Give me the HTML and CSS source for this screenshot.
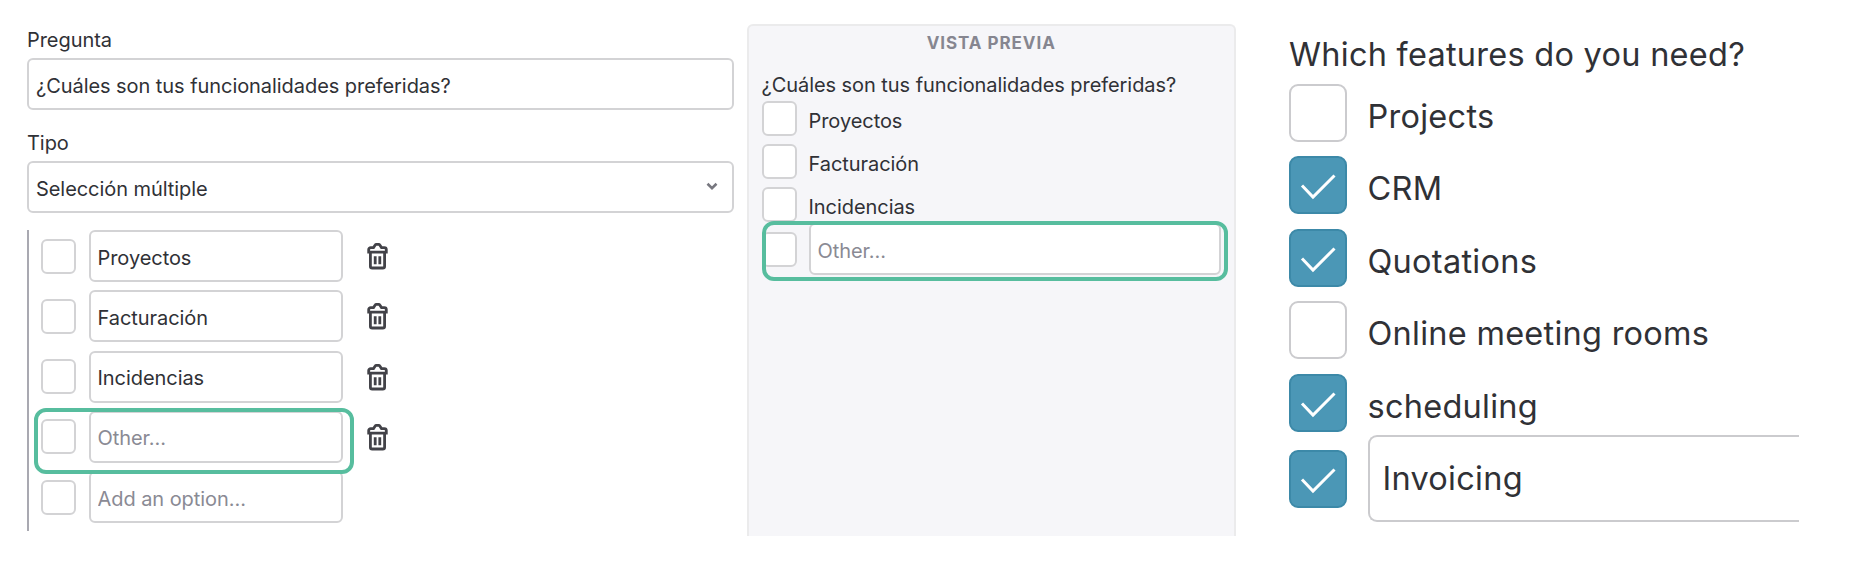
FILE: index.html
```html
<!DOCTYPE html>
<html lang="es">
<head>
  <meta charset="utf-8">
  <title>Encuesta</title>
  <link rel="stylesheet" href="styles.css">
</head>
<body>
<svg class="symbols" width="0" height="0">
  <symbol id="trash" viewBox="0 0 22 28">
    <path d="M3.400 11v13.200a1.800 1.800 0 0 0 1.800 1.800h10.600a1.800 1.800 0 0 0 1.800-1.800V11M1.700 10.200V7.600a2 2 0 0 1 2-2h2.800l1.700-2.600a1.400 1.400 0 0 1 1.200-.7h2.200a1.400 1.400 0 0 1 1.200.7l1.700 2.600h2.800a2 2 0 0 1 2 2v2.600zM8.200 14.200v8M12.800 14.200v8"/>
  </symbol>
  <symbol id="check" viewBox="0 0 58 58">
    <path d="M13 29.500l11 11.500L45.500 19.500"/>
  </symbol>
</svg>
<div class="page">

  <form class="editor">
    <label class="label" for="question">Pregunta</label>
    <input class="input" id="question" type="text" value="¿Cuáles son tus funcionalidades preferidas?">
    <label class="label label-type">Tipo</label>
    <div class="input select">
      <span>Selección múltiple</span>
      <svg class="chevron" width="12" height="9" viewBox="0 0 12 9"><path d="M1.500 1.800L6 6.200l4.500-4.400"/></svg>
    </div>
    <div class="options">
      <div class="option">
        <span class="box"></span>
        <input class="input" type="text" value="Proyectos">
        <svg class="trash"><use href="#trash"/></svg>
      </div>
      <div class="option">
        <span class="box"></span>
        <input class="input" type="text" value="Facturación">
        <svg class="trash"><use href="#trash"/></svg>
      </div>
      <div class="option">
        <span class="box"></span>
        <input class="input" type="text" value="Incidencias">
        <svg class="trash"><use href="#trash"/></svg>
      </div>
      <div class="option">
        <span class="box"></span>
        <input class="input" type="text" placeholder="Other...">
        <svg class="trash"><use href="#trash"/></svg>
        <div class="highlight highlight-option"></div>
      </div>
      <div class="option">
        <span class="box"></span>
        <input class="input" type="text" placeholder="Add an option...">
      </div>
    </div>
  </form>

  <div class="preview">
    <h2 class="preview-title">VISTA PREVIA</h2>
    <p class="preview-question">¿Cuáles son tus funcionalidades preferidas?</p>
    <div class="choice"><span class="box"></span><span class="choice-text">Proyectos</span></div>
    <div class="choice"><span class="box"></span><span class="choice-text">Facturación</span></div>
    <div class="choice"><span class="box"></span><span class="choice-text">Incidencias</span></div>
    <div class="choice choice-other">
      <span class="box"></span>
      <input class="input" type="text" placeholder="Other...">
      <div class="highlight highlight-choice"></div>
    </div>
  </div>

  <div class="survey">
    <p class="survey-question">Which features do you need?</p>
    <div class="feature"><span class="tick"></span><span class="feature-text">Projects</span></div>
    <div class="feature"><span class="tick checked"><svg><use href="#check"/></svg></span><span class="feature-text">CRM</span></div>
    <div class="feature"><span class="tick checked"><svg><use href="#check"/></svg></span><span class="feature-text">Quotations</span></div>
    <div class="feature"><span class="tick"></span><span class="feature-text">Online meeting rooms</span></div>
    <div class="feature"><span class="tick checked"><svg><use href="#check"/></svg></span><span class="feature-text">scheduling</span></div>
    <div class="feature feature-other">
      <span class="tick checked"><svg><use href="#check"/></svg></span>
      <div class="feature-input">Invoicing</div>
    </div>
  </div>

</div>
</body>
</html>
```

FILE: styles.css
```css
* {
    box-sizing: border-box;
}

body {
    margin: 0;
    background: #fff;
    color: #303136;
    font-family: Inter, "Liberation Sans", sans-serif;
    font-size: 20px;
    line-height: 24px;
    letter-spacing: -.06px;
}

p, h2 {
    margin: 0;
}

.symbols {
    position: absolute;
}

.page {
    display: flex;
    align-items: flex-start;
    width: 1870px;
    height: 562px;
    overflow: hidden;
}

/* shared fields */
.input {
    display: block;
    width: 100%;
    height: 52px;
    margin: 0;
    padding: 3px 7px 0;
    border: 2px solid #d3d3d5;
    border-radius: 6px;
    background: #fff;
    color: #303136;
    font: inherit;
    letter-spacing: inherit;
    outline: none;
}

.input::placeholder {
    color: #8a8a94;
    opacity: 1;
}

.box {
    flex: none;
    width: 35px;
    height: 35px;
    border: 2px solid #d3d3d5;
    border-radius: 6px;
    background: #fff;
}

.highlight {
    position: absolute;
    z-index: 1;
    border: 4px solid #57bd9e;
    border-radius: 12px;
}

/* question editor */
.editor {
    width: 707px;
    margin-left: 27px;
    padding-top: 28px;
}

.label {
    display: block;
    height: 30px;
}

.label-type {
    margin-top: 21px;
}

.select {
    display: flex;
    align-items: center;
    justify-content: space-between;
}

.chevron {
    margin: -4px 7px 0 0;
    fill: none;
    stroke: #77777f;
    stroke-width: 2.6;
}

.options {
    display: flex;
    flex-direction: column;
    gap: 8.250px;
    height: 301px;
    margin-top: 17px;
    border-left: 2px solid #a9a9b1;
}

.option {
    position: relative;
    display: flex;
    align-items: center;
    padding-left: 12px;
}

.option .box {
    margin-right: 12.500px;
}

.option .input {
    width: 254px;
}

.trash {
    width: 22px;
    height: 28px;
    margin-left: 24px;
    fill: none;
    stroke: #424248;
    stroke-width: 2.8;
}

.highlight-option {
    left: 5px;
    top: -3px;
    width: 320px;
    height: 66px;
}

/* preview */
.preview {
    width: 489px;
    height: 512px;
    margin: 24px 0 0 13px;
    padding: 5px 13px 0 12.500px;
    border: 2px solid #ebebec;
    border-bottom: 0;
    border-radius: 6px 6px 0 0;
    background: #f6f6f9;
}

.preview-title {
    color: #868690;
    font-size: 17px;
    font-weight: 700;
    letter-spacing: .95px;
    text-align: center;
}

.preview-question {
    margin-top: 18px;
}

.choice {
    position: relative;
    display: flex;
    align-items: center;
    height: 35px;
    margin-bottom: 8px;
}

.preview-question + .choice {
    margin-top: 4px;
}

.choice .box {
    margin-right: 12px;
}

.choice-text {
    padding-top: 4px;
}

.choice-other {
    height: 52px;
    margin-top: -7px;
}

.choice-other .input {
    width: 413px;
}

.highlight-choice {
    left: 0;
    top: -2px;
    width: 466px;
    height: 60px;
}

/* published survey */
.survey {
    width: 510px;
    margin-left: 53px;
    padding-top: 35px;
    font-size: 32.500px;
    line-height: 40px;
    letter-spacing: .26px;
}

.feature {
    display: flex;
    align-items: center;
    height: 58px;
    margin-bottom: 14.500px;
}

.survey-question + .feature {
    margin-top: 8.500px;
}

.tick {
    flex: none;
    width: 57.500px;
    height: 58px;
    margin-right: 21px;
    border: 2px solid #cbcbce;
    border-radius: 9px;
}

.checked {
    border-color: #3c89a8;
    background: #4b97b6;
}

.tick svg {
    display: block;
    width: 58px;
    height: 58px;
    margin: -2px;
    fill: none;
    stroke: #fff;
    stroke-width: 3;
}

.feature-text {
    padding-top: 8px;
}

.feature-other {
    height: 87px;
    margin-top: -11px;
}

.feature-input {
    flex: 1;
    height: 87px;
    padding: 22px 13px 0;
    border: 2px solid #cbcbce;
    border-right: 0;
    border-radius: 9px 0 0 9px;
}
```
